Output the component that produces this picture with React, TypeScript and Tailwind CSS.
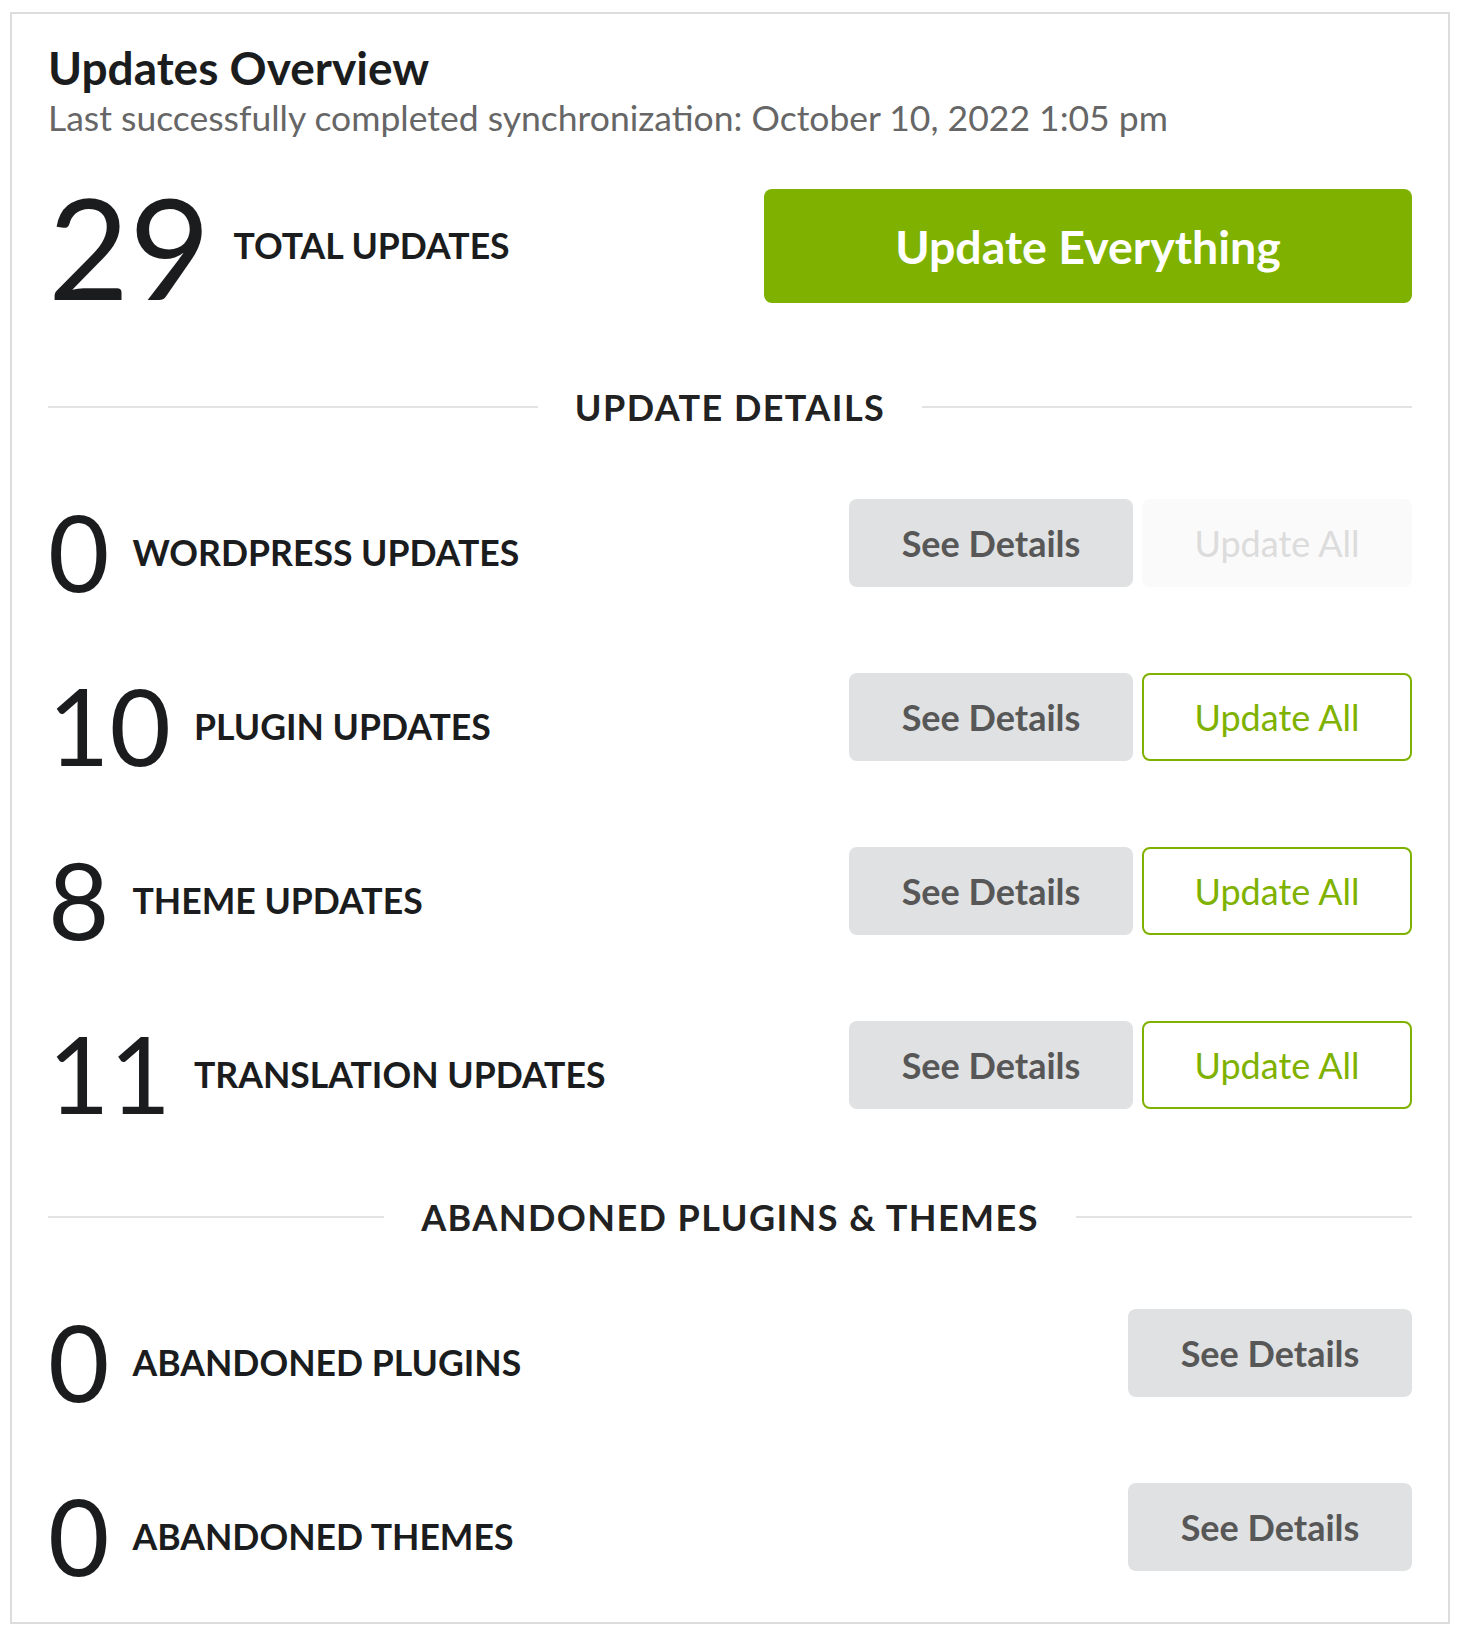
import React from "react";

function SeeDetails() {
  return (
    <button className="w-[284px] h-[88px] rounded-[8px] bg-[#e0e1e2] text-[#575757] text-[36px] font-bold leading-none flex items-center justify-center">
      See Details
    </button>
  );
}

function UpdateAll({ disabled }: { disabled?: boolean }) {
  if (disabled) {
    return (
      <button className="w-[270px] h-[88px] rounded-[8px] bg-[#fafafa] text-[#dcdcdc] text-[36px] leading-none flex items-center justify-center">
        Update All
      </button>
    );
  }
  return (
    <button className="w-[270px] h-[88px] rounded-[8px] border-2 border-[#7fb200] bg-white text-[#7fb200] text-[36px] leading-none flex items-center justify-center">
      Update All
    </button>
  );
}

function Divider({ text }: { text: string }) {
  return (
    <div className="flex items-center h-[36px]">
      <div className="flex-1 h-[2px] bg-[#e3e3e3]" />
      <span className="px-[37px] text-[36px] leading-none font-bold uppercase tracking-[0.04em] text-[#222]">
        {text}
      </span>
      <div className="flex-1 h-[2px] bg-[#e3e3e3]" />
    </div>
  );
}

function Row({
  value,
  label,
  children,
}: {
  value: string;
  label: string;
  children: React.ReactNode;
}) {
  return (
    <div className="flex items-start justify-between h-[112px]">
      <div className="flex items-center h-[112px]">
        <span className="text-[106px] leading-none text-[#1b1c1d]">{value}</span>
        <span className="ml-[23px] pt-[3px] text-[35.6px] leading-none font-bold uppercase text-[#1b1c1d]">
          {label}
        </span>
      </div>
      <div className="flex gap-[9px] mt-[4px]">{children}</div>
    </div>
  );
}

export default function App() {
  return (
    <div
      className="bg-white min-h-screen pt-[12px] pl-[10px]"
      style={{ fontFamily: "Lato, 'Open Sans', sans-serif" }}
    >
      <div className="w-[1440px] border-2 border-[#dcdcdc] pt-[30px] px-[36px] pb-[31px]">
        <h1 className="text-[46px] leading-[48px] font-bold text-[#1b1c1d]">Updates Overview</h1>
        <p className="mt-[8px] text-[35.5px] leading-[36px] text-[#666666]">
          Last successfully completed synchronization: October 10, 2022 1:05 pm
        </p>

        <div className="mt-[40px] flex items-center justify-between h-[140px]">
          <div className="flex items-center">
            <span className="text-[140px] leading-none text-[#1b1c1d]">29</span>
            <span className="ml-[23px] text-[35.6px] leading-none font-bold uppercase text-[#1b1c1d]">
              Total Updates
            </span>
          </div>
          <button className="w-[648px] h-[114px] rounded-[8px] bg-[#7fb200] text-white text-[46.5px] font-bold leading-none flex items-center justify-center">
            Update Everything
          </button>
        </div>

        <div className="mt-[73px]">
          <Divider text="Update Details" />
        </div>

        <div className="mt-[70px] flex flex-col gap-[62px]">
          <Row value="0" label="WordPress Updates">
            <SeeDetails />
            <UpdateAll disabled />
          </Row>
          <Row value="10" label="Plugin Updates">
            <SeeDetails />
            <UpdateAll />
          </Row>
          <Row value="8" label="Theme Updates">
            <SeeDetails />
            <UpdateAll />
          </Row>
          <Row value="11" label="Translation Updates">
            <SeeDetails />
            <UpdateAll />
          </Row>
        </div>

        <div className="mt-[70px]">
          <Divider text="Abandoned Plugins & Themes" />
        </div>

        <div className="mt-[70px] flex flex-col gap-[62px]">
          <Row value="0" label="Abandoned Plugins">
            <SeeDetails />
          </Row>
          <Row value="0" label="Abandoned Themes">
            <SeeDetails />
          </Row>
        </div>
      </div>
    </div>
  );
}
